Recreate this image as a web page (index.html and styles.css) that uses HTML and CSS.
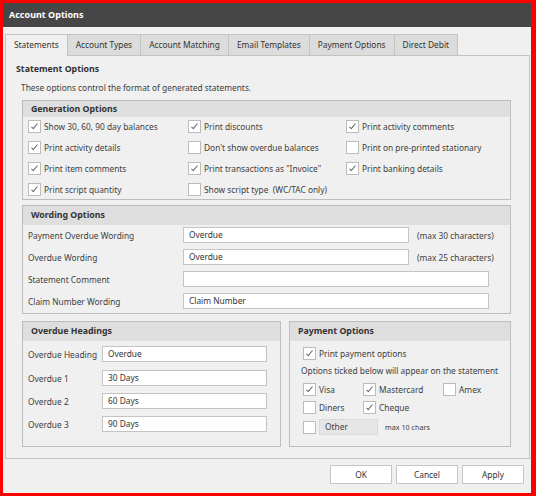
FILE: index.html
```html
<!DOCTYPE html>
<html lang="en">
<head>
    <meta charset="UTF-8">
    <title>Account Options</title>
    <link rel="stylesheet" href="styles.css">
</head>
<body>
    <div class="window">
        <div class="title-bar">Account Options</div>
        <div class="content">
            <div class="tabs">
                <div class="tab active">Statements</div>
                <div class="tab">Account Types</div>
                <div class="tab">Account Matching</div>
                <div class="tab">Email Templates</div>
                <div class="tab">Payment Options</div>
                <div class="tab">Direct Debit</div>
            </div>
            <div class="panel">
                <div class="panel-title">Statement Options</div>
                <div class="panel-desc">These options control the format of generated statements.</div>

                <div class="groups">
                    <div class="group">
                        <div class="group-head small">Generation Options</div>
                        <div class="check-grid">
                            <div class="check"><span class="box on"></span>Show 30, 60, 90 day balances</div>
                            <div class="check"><span class="box on"></span>Print discounts</div>
                            <div class="check"><span class="box on"></span>Print activity comments</div>
                            <div class="check"><span class="box on"></span>Print activity details</div>
                            <div class="check"><span class="box"></span>Don't show overdue balances</div>
                            <div class="check"><span class="box"></span>Print on pre-printed stationary</div>
                            <div class="check"><span class="box on"></span>Print item comments</div>
                            <div class="check"><span class="box on"></span>Print transactions as "Invoice"</div>
                            <div class="check"><span class="box on"></span>Print banking details</div>
                            <div class="check"><span class="box on"></span>Print script quantity</div>
                            <div class="check"><span class="box"></span>Show script type&nbsp; (WC/TAC only)</div>
                        </div>
                    </div>

                    <div class="group wording">
                        <div class="group-head">Wording Options</div>
                        <div class="field-list">
                            <div class="field-row">
                                <span class="field-label">Payment Overdue Wording</span>
                                <span class="input">Overdue</span>
                                <span class="note">(max 30 characters)</span>
                            </div>
                            <div class="field-row">
                                <span class="field-label">Overdue Wording</span>
                                <span class="input">Overdue</span>
                                <span class="note">(max 25 characters)</span>
                            </div>
                            <div class="field-row">
                                <span class="field-label">Statement Comment</span>
                                <span class="input wide"></span>
                            </div>
                            <div class="field-row">
                                <span class="field-label">Claim Number Wording</span>
                                <span class="input wide">Claim Number</span>
                            </div>
                        </div>
                    </div>

                    <div class="bottom-groups">
                        <div class="group overdue">
                            <div class="group-head">Overdue Headings</div>
                            <div class="overdue-list">
                                <div class="overdue-row first">
                                    <span class="overdue-label">Overdue Heading</span>
                                    <span class="input">Overdue</span>
                                </div>
                                <div class="overdue-row">
                                    <span class="overdue-label">Overdue 1</span>
                                    <span class="input">30 Days</span>
                                </div>
                                <div class="overdue-row">
                                    <span class="overdue-label">Overdue 2</span>
                                    <span class="input">60 Days</span>
                                </div>
                                <div class="overdue-row">
                                    <span class="overdue-label">Overdue 3</span>
                                    <span class="input">90 Days</span>
                                </div>
                            </div>
                        </div>

                        <div class="group payment">
                            <div class="group-head">Payment Options</div>
                            <div class="payment-body">
                                <div class="check"><span class="box on"></span>Print payment options</div>
                                <div class="payment-hint">Options ticked below will appear on the statement</div>
                                <div class="card-grid">
                                    <div class="check"><span class="box on"></span>Visa</div>
                                    <div class="check"><span class="box on"></span>Mastercard</div>
                                    <div class="check"><span class="box"></span>Amex</div>
                                    <div class="check"><span class="box"></span>Diners</div>
                                    <div class="check"><span class="box on"></span>Cheque</div>
                                </div>
                                <div class="other-row">
                                    <span class="box"></span>
                                    <span class="other-input">Other</span>
                                    <span class="other-note">max 10 chars</span>
                                </div>
                            </div>
                        </div>
                    </div>
                </div>
            </div>
            <div class="buttons">
                <button class="button">OK</button>
                <button class="button">Cancel</button>
                <button class="button">Apply</button>
            </div>
        </div>
    </div>
</body>
</html>
```

FILE: styles.css
```css
body {
    margin: 0;
    background: #ff0000;
    font-family: "Noto Sans", "Liberation Sans", sans-serif;
    font-size: 8.35px;
    color: #404040;
}
.window {
    width: 528px;
    height: 490px;
    margin: 3px 5px 3px 3px;
    background: #f0f0f0;
    display: flex;
    flex-direction: column;
}
.title-bar {
    height: 24px;
    line-height: 24px;
    padding-left: 6px;
    background: #464646;
    color: #fff;
    font-weight: bold;
    font-size: 9px;
}
.content {
    padding: 7px 1px 0 2px;
}
.tabs {
    display: flex;
    height: 21px;
}
.tab {
    height: 21px;
    line-height: 20px;
    padding: 0 8px;
    box-sizing: border-box;
    border: 1px solid #c3c3c3;
    border-bottom: none;
    margin-right: -1px;
    background: #dcdcdc;
    color: #333;
}
.tab.active {
    background: #f0f0f0;
    height: 22px;
    position: relative;
    z-index: 1;
}
.panel {
    height: 404px;
    box-sizing: border-box;
    border: 1px solid #c3c3c3;
    padding: 6px 18px 0 10px;
}
.panel-title {
    font-weight: bold;
    font-size: 8.8px;
    line-height: 14px;
    color: #333;
}
.panel-desc {
    margin-top: 5px;
    padding-left: 5px;
    line-height: 14px;
}
.groups {
    margin: 5px 0 0 6px;
}
.group {
    border: 1px solid #bdbdbd;
}
.group-head {
    height: 19px;
    line-height: 19px;
    padding-left: 8px;
    background: #dedede;
    font-weight: bold;
    font-size: 8.8px;
    color: #333;
}
.group-head.small {
    height: 16px;
    line-height: 16px;
}

/* checkboxes */
.check {
    display: flex;
    align-items: center;
    height: 16px;
    white-space: nowrap;
}
.box {
    width: 13px;
    height: 13px;
    box-sizing: border-box;
    border: 1px solid #bcbcbc;
    background: #fff;
    margin-right: 3px;
    position: relative;
    flex-shrink: 0;
}
.box.on::after {
    content: "";
    position: absolute;
    left: 4px;
    top: 1px;
    width: 2px;
    height: 6px;
    border-right: 1px solid #666;
    border-bottom: 1px solid #666;
    transform: rotate(40deg);
}
.check-grid {
    display: grid;
    grid-template-columns: 160px 158px 1fr;
    row-gap: 5px;
    padding: 1px 0 2px 5px;
}

/* wording */
.wording {
    margin-top: 5px;
}
.field-list {
    display: flex;
    flex-direction: column;
    gap: 6px;
    padding: 2px 0 4px 5px;
}
.field-row {
    display: flex;
    align-items: center;
}
.field-label {
    width: 155px;
}
.input {
    height: 16px;
    line-height: 14px;
    box-sizing: border-box;
    border: 1px solid #c4c4c4;
    background: #fff;
    padding-left: 5px;
    width: 226px;
    color: #333;
}
.input.wide {
    width: 306px;
}
.note {
    margin-left: 8px;
}

/* bottom */
.bottom-groups {
    display: flex;
    gap: 8px;
    margin-top: 7px;
}
.bottom-groups .group {
    height: 126px;
    box-sizing: border-box;
}
.overdue {
    width: 259px;
}
.payment {
    flex: 1;
}
.overdue-list {
    display: flex;
    flex-direction: column;
    gap: 7px;
    padding: 5px 0 0 5px;
}
.overdue-row {
    display: flex;
    align-items: center;
}
.overdue-row.first {
    margin-bottom: 1px;
}
.overdue-label {
    width: 74px;
}
.overdue-row .input {
    width: 165px;
}
.payment-body {
    padding: 4px 0 0 13px;
}
.payment-hint {
    line-height: 14px;
    margin: 3px 0 3px -2px;
}
.card-grid {
    display: grid;
    grid-template-columns: 60px 80px 1fr;
    row-gap: 2px;
}
.other-row {
    display: flex;
    align-items: center;
    margin-top: 4px;
}
.other-input {
    width: 59px;
    height: 16px;
    line-height: 14px;
    box-sizing: border-box;
    border: 1px solid #dadada;
    background: #e6e6e6;
    padding-left: 5px;
}
.other-note {
    margin-left: 7px;
    font-size: 7.2px;
}

.buttons {
    display: flex;
    justify-content: flex-end;
    gap: 4px;
    margin-top: 6px;
    padding-right: 6px;
}
.button {
    width: 62px;
    height: 19px;
    border: 1px solid #c6c6c6;
    background: #fff;
    font-family: inherit;
    font-size: 8.35px;
    color: #333;
    padding: 0;
}
```
